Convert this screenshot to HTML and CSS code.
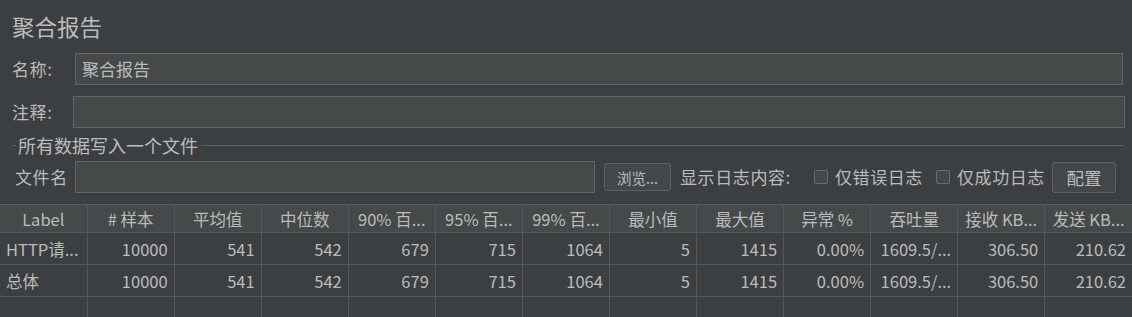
FILE: index.html
```html
<!DOCTYPE html>
<html lang="zh-CN">
<head>
<meta charset="utf-8">
<link rel="stylesheet" href="styles.css">
</head>
<body>
<div class="panel">
  <div class="title">聚合报告</div>
  <div class="form-row name-row">
    <span class="label">名称:</span>
    <div class="input">聚合报告</div>
  </div>
  <div class="form-row comment-row">
    <span class="label">注释:</span>
    <div class="input"></div>
  </div>
  <div class="section">
    <span class="sec-line short"></span>
    <span class="sec-title">所有数据写入一个文件</span>
    <span class="sec-line long"></span>
  </div>
  <div class="file-row">
    <span class="label file-label">文件名</span>
    <div class="input file-input"></div>
    <button class="btn browse">浏览...</button>
    <span class="label log-label">显示日志内容:</span>
    <span class="check"></span>
    <span class="label check-label">仅错误日志</span>
    <span class="check"></span>
    <span class="label check-label">仅成功日志</span>
    <button class="btn config">配置</button>
  </div>
</div>
<table class="grid">
  <thead>
    <tr>
      <th>Label</th><th># 样本</th><th>平均值</th><th>中位数</th><th>90% 百...</th><th>95% 百...</th><th>99% 百...</th><th>最小值</th><th>最大值</th><th>异常 %</th><th>吞吐量</th><th>接收 KB...</th><th>发送 KB...</th>
    </tr>
  </thead>
  <tbody>
    <tr>
      <td class="txt">HTTP请...</td><td>10000</td><td>541</td><td>542</td><td>679</td><td>715</td><td>1064</td><td>5</td><td>1415</td><td>0.00%</td><td>1609.5/...</td><td>306.50</td><td>210.62</td>
    </tr>
    <tr>
      <td class="txt">总体</td><td>10000</td><td>541</td><td>542</td><td>679</td><td>715</td><td>1064</td><td>5</td><td>1415</td><td>0.00%</td><td>1609.5/...</td><td>306.50</td><td>210.62</td>
    </tr>
    <tr class="empty">
      <td></td><td></td><td></td><td></td><td></td><td></td><td></td><td></td><td></td><td></td><td></td><td></td><td></td>
    </tr>
  </tbody>
</table>
</body>
</html>
```

FILE: styles.css
```css
html, body {
  margin: 0;
  padding: 0;
  background: #3c3f41;
  overflow: hidden;
}
body {
  width: 1132px;
  height: 317px;
  color: #bbbbbb;
  font-family: "Noto Sans CJK SC", "Noto Sans", sans-serif;
  font-size: 17px;
}
.panel {
  padding: 0 9px 0 12px;
}
.title {
  font-size: 22.5px;
  line-height: 28px;
  padding-top: 12px;
  height: 41px;
}
.form-row {
  display: flex;
  align-items: center;
  height: 32px;
}
.comment-row {
  margin-top: 11px;
  margin-right: -2px;
}
.label {
  white-space: nowrap;
  line-height: 20px;
  letter-spacing: 0.6px;
}
.name-row .label {
  width: 63px;
}
.comment-row .label {
  width: 61px;
}
.input {
  flex: 1;
  box-sizing: border-box;
  height: 32px;
  background: #45494a;
  border: 1px solid #646464;
  padding: 0 6px;
  line-height: 30px;
  font-size: 17px;
}
.section {
  display: flex;
  align-items: center;
  height: 30px;
  margin-top: 2px;
}
.sec-line {
  height: 1px;
  background: #5e6163;
}
.sec-line.short {
  width: 4px;
}
.sec-line.long {
  flex: 1;
  margin-left: 3px;
  margin-right: -1px;
}
.sec-title {
  font-size: 18px;
  line-height: 22px;
  padding-left: 2px;
  white-space: nowrap;
}
.file-row {
  display: flex;
  align-items: center;
  height: 32px;
  margin-top: 1px;
}
.file-label {
  margin-left: 3px;
  width: 60px;
}
.file-input {
  flex: none;
  width: 520px;
}
.btn {
  font-family: inherit;
  color: #bbbbbb;
  background: #43474a;
  border: 1px solid #5e6162;
  border-radius: 3px;
  padding: 0;
  box-sizing: border-box;
}
.browse {
  width: 67px;
  height: 28px;
  margin-left: 9px;
  font-size: 14.5px;
}
.log-label {
  margin-left: 9px;
}
.check {
  width: 14px;
  height: 14px;
  box-sizing: border-box;
  border: 1px solid #6b6b6b;
  border-radius: 2px;
  background: #43494a;
  margin-left: 23px;
}
.check + .check-label {
  margin-left: 7px;
}
.check-label + .check {
  margin-left: 13px;
}
.config {
  width: 64px;
  height: 31px;
  margin-left: 7px;
  font-size: 17.5px;
}
.grid {
  margin-top: 11px;
  width: 1132px;
  table-layout: fixed;
  border-collapse: collapse;
  font-size: 16.5px;
}
.grid th, .grid td {
  border: 1px solid #55585a;
  padding: 0 6px 0 6px;
  white-space: nowrap;
  overflow: hidden;
}
.grid th {
  background: #45494a;
  font-weight: normal;
  height: 27px;
  text-align: center;
  border-top-color: #5a5e60;
  line-height: 20px;
}
.grid td {
  height: 31px;
  text-align: right;
  line-height: 20px;
}
.grid td.txt {
  text-align: left;
}
.grid tr > :first-child {
  border-left: none;
}
.grid tr > :last-child {
  border-right: none;
}
```
